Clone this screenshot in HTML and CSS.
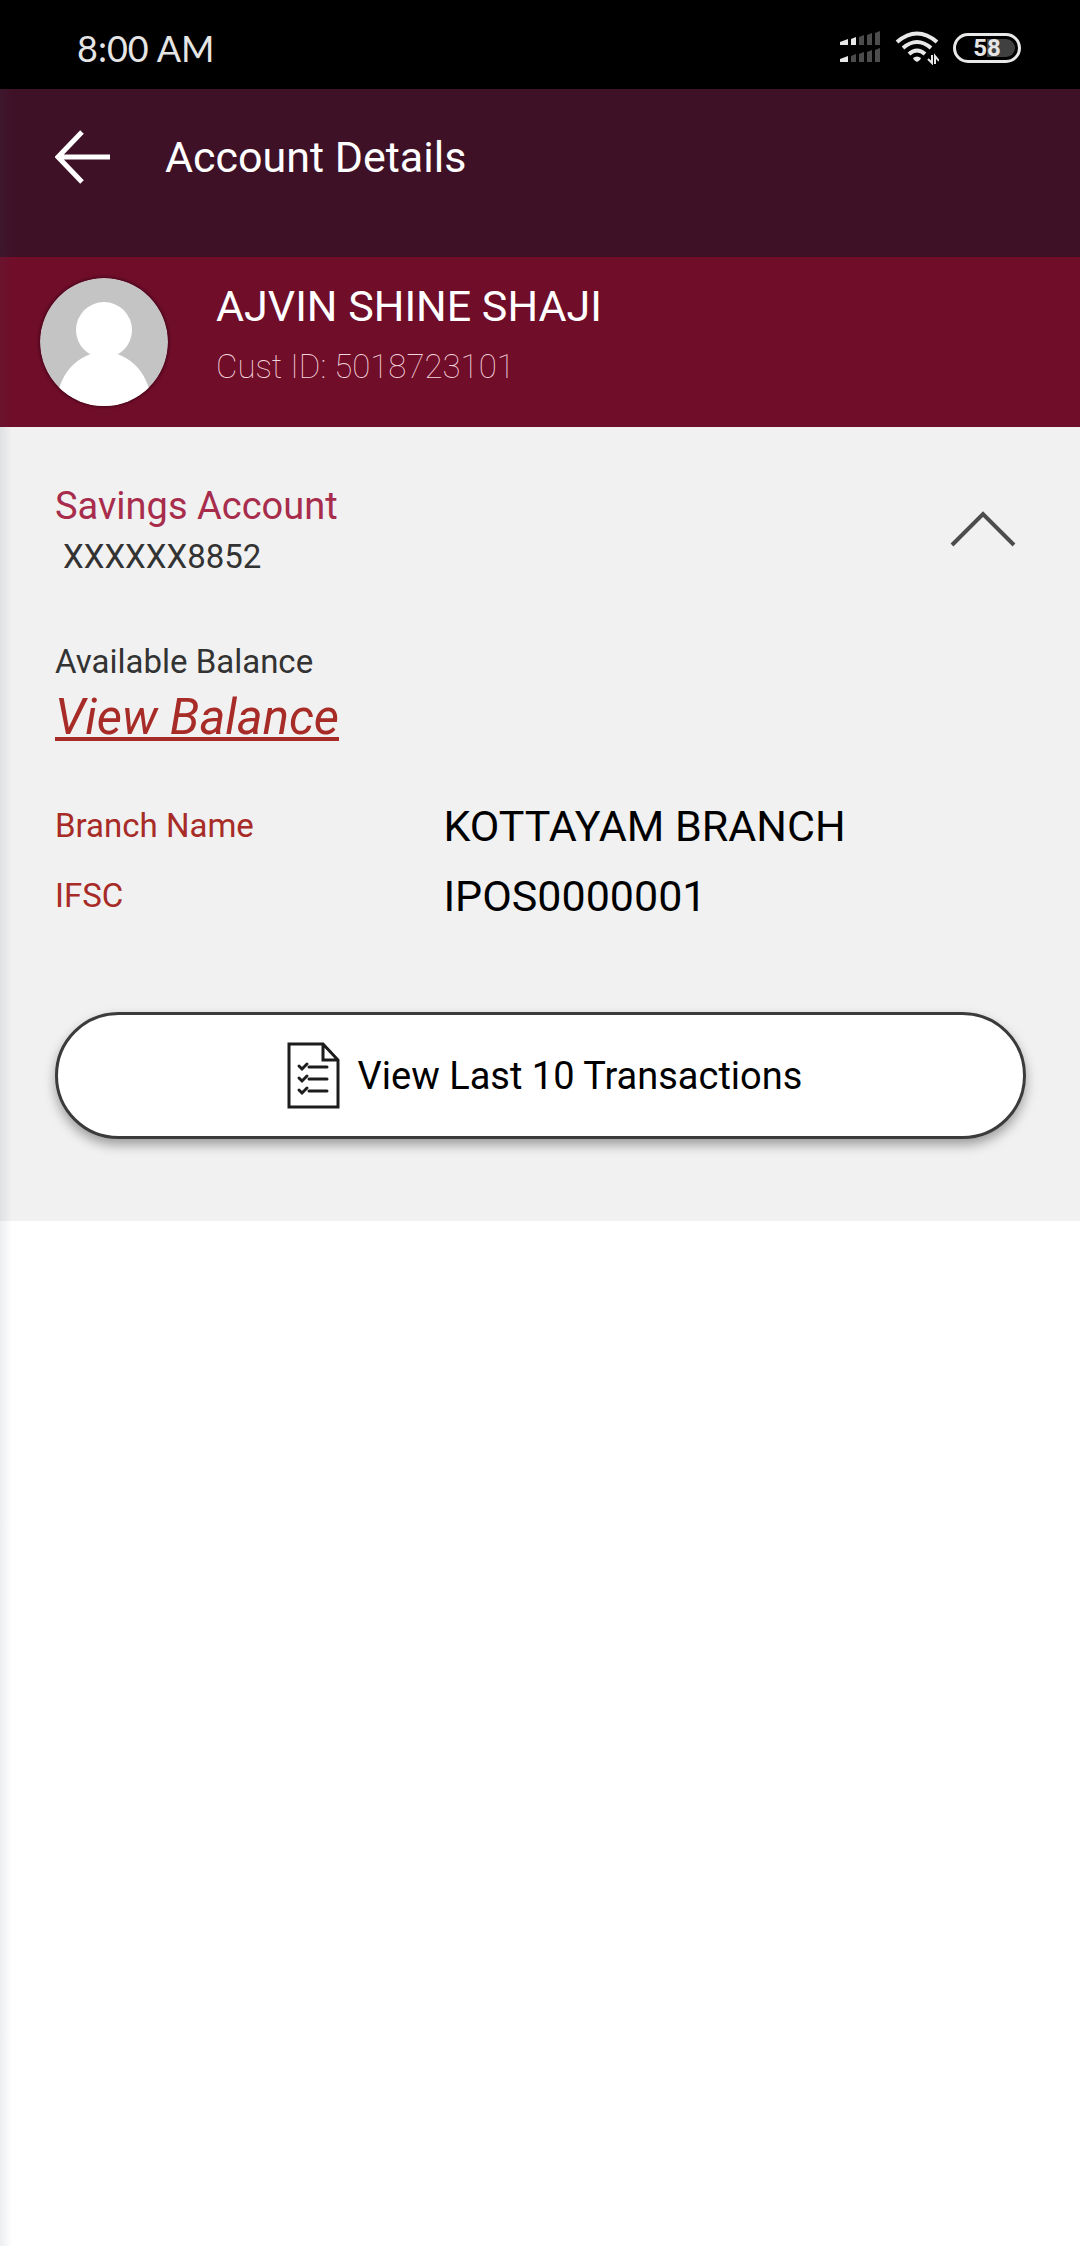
FILE: index.html
```html
<!DOCTYPE html>
<html lang="en">
<head>
<meta charset="utf-8">
<meta name="viewport" content="width=device-width, initial-scale=1">
<title>Account Details</title>
<link rel="stylesheet" href="styles.css">
</head>
<body>
<div class="status-bar">
  <span class="status-time">8:00 AM</span>
  <div class="status-icons">
    <svg class="signal" viewBox="0 0 42 34" aria-hidden="true">
      <g fill="#e8e8e8">
        <path d="M1 11l8-3v6H1zM12 8l5-2v8h-5zM1 28l8-3v6H1z"/>
      </g>
      <g fill="#4c4c4c">
        <path d="M20 6l5-2v10h-5zM28 4l5-2v12h-5zM36 2l5-2v14h-5zM12 25l5-2v8h-5zM20 23l5-2v10h-5zM28 21l5-2v12h-5zM36 19l5-2v14h-5z"/>
      </g>
    </svg>
    <svg class="wifi" viewBox="0 0 44 34" aria-hidden="true">
      <g fill="none" stroke="#e8e8e8" stroke-width="4">
        <path d="M2 11Q22-6 42 11"/>
        <path d="M8 17Q22 5 36 17"/>
        <path d="M14 23Q22 16 30 23"/>
      </g>
      <path d="M18 27q4-3 8 0l-1 2-3 2-3-2z" fill="#e8e8e8"/>
      <path d="M37 24v8l-4-4M40 33v-8l4 5" fill="none" stroke="#e8e8e8" stroke-width="2"/>
    </svg>
    <span class="battery"><span class="battery-value">58</span></span>
  </div>
</div>

<div class="screen">
  <header class="app-bar">
    <button class="back" type="button" aria-label="Back">
      <svg viewBox="0 0 56 56" aria-hidden="true"><path d="M27 3L3 28l24 25M3 28h52" fill="none" stroke="#fff" stroke-width="5"/></svg>
    </button>
    <h1 class="title">Account Details</h1>
  </header>

  <section class="profile">
    <svg class="avatar" viewBox="0 0 128 128" aria-hidden="true">
      <circle cx="64" cy="64" r="64" fill="#c4c4c4"/>
      <circle cx="64" cy="52" r="28" fill="#fff"/>
      <ellipse cx="64" cy="126" rx="47" ry="52" fill="#fff"/>
    </svg>
    <div class="profile-text">
      <p class="name">AJVIN SHINE SHAJI</p>
      <p class="cust-id">Cust ID: 5018723101</p>
    </div>
  </section>

  <main class="account">
    <div class="account-head">
      <div>
        <h2 class="account-type">Savings Account</h2>
        <p class="account-number">XXXXXX8852</p>
      </div>
      <button class="collapse" type="button" aria-label="Collapse account">
        <svg viewBox="0 0 68 36" aria-hidden="true"><path d="M3 34L34 3l31 31" fill="none" stroke="#4d4d4d" stroke-width="4"/></svg>
      </button>
    </div>
    <p class="balance-label">Available Balance</p>
    <a class="balance-link" href="#balance">View Balance</a>
    <dl class="facts">
      <dt>Branch Name</dt><dd>KOTTAYAM BRANCH</dd>
      <dt>IFSC</dt><dd>IPOS0000001</dd>
    </dl>
    <button class="transactions" type="button">
      <svg viewBox="0 0 54 67" aria-hidden="true">
        <g fill="none" stroke="#1c1c1c" stroke-width="3">
          <path d="M2 2h34l15 16v47H2zM36 2v16h15"/>
          <path d="M22 25h18M22 37h18M22 49h18" stroke-linecap="round"/>
          <path d="M12 24l3 3 5-5M12 36l3 3 5-5M12 48l3 3 5-5" stroke-linecap="round"/>
        </g>
      </svg>
      <span>View Last 10 Transactions</span>
    </button>
  </main>
</div>
</body>
</html>
```

FILE: styles.css
```css
* {
  box-sizing: border-box;
}

body {
  margin: 0;
  min-height: 100vh;
  display: flex;
  flex-direction: column;
  background: #fff;
  font-family: Roboto, "Liberation Sans", sans-serif;
  font-size: 33px;
  line-height: 40px;
}

h1, h2, p, dl, dd {
  margin: 0;
  font-weight: 400;
}

button {
  border: 0;
  padding: 0;
  background: none;
  font: inherit;
  color: inherit;
}

svg {
  display: block;
}

.status-bar {
  display: flex;
  align-items: center;
  justify-content: space-between;
  height: 89px;
  padding: 6px 59px 0 77px;
  background: #000;
  color: #e5e5e5;
}

.status-time {
  font-family: Lato, sans-serif;
  font-size: 36px;
}

.status-icons {
  display: flex;
  align-items: center;
  gap: 14px;
}

.signal {
  width: 42px;
  height: 34px;
}

.wifi {
  width: 44px;
  height: 34px;
}

.battery {
  display: flex;
  align-items: center;
  justify-content: center;
  width: 68px;
  height: 30px;
  border: 3px solid #e8e8e8;
  border-radius: 15px;
  padding: 3px;
}

.battery-value {
  flex: 1;
  border-radius: 9px;
  background: linear-gradient(90deg, #000 50%, #404040 50%);
  font-size: 24px;
  font-weight: 700;
  line-height: 18px;
  text-align: center;
}

/* Soft shade along the left edge of the sliding screen */
.screen {
  position: relative;
  flex: 1;
}

.screen::before {
  content: "";
  position: absolute;
  inset: 0 auto 0 0;
  width: 12px;
  background: linear-gradient(90deg, rgba(60, 80, 100, 0.1), rgba(60, 80, 100, 0));
}

.app-bar {
  display: flex;
  align-items: flex-start;
  gap: 54px;
  height: 168px;
  padding: 40px 55px;
  background: #3e1127;
  color: #fff;
}

.back {
  width: 56px;
  height: 56px;
}

.title {
  font-size: 43px;
  line-height: 56px;
}

.profile {
  display: flex;
  align-items: center;
  gap: 48px;
  height: 170px;
  padding: 0 40px;
  background: #700d29;
}

.avatar {
  width: 128px;
  height: 128px;
  border-radius: 50%;
  box-shadow: 0 0 3px 1px rgba(40, 0, 20, 0.6);
}

.profile-text {
  align-self: flex-start;
  padding-top: 21px;
}

.name {
  font-size: 43px;
  line-height: 56px;
  color: #fff;
}

.cust-id {
  margin-top: 13px;
  font-weight: 100;
  color: #f3d3dc;
}

.account {
  padding: 55px 54px 82px 55px;
  background: #f1f1f1;
}

.account-head {
  display: flex;
  justify-content: space-between;
  align-items: flex-start;
}

.account-type {
  font-size: 38px;
  line-height: 48px;
  color: #a82c4b;
}

.account-number {
  padding: 7px 8px;
  color: #333;
}

.collapse {
  width: 68px;
  margin: 29px 9px 0 0;
}

.balance-label {
  margin-top: 58px;
  color: #333;
}

.balance-link {
  display: inline-block;
  font-size: 49px;
  line-height: 56px;
  margin-top: 8px;
  font-style: italic;
  color: #a72b26;
  text-decoration-thickness: 4px;
  text-underline-offset: 3px;
  text-decoration-skip-ink: none;
}

.facts {
  display: grid;
  grid-template-columns: 2fr 3fr;
  align-items: center;
  row-gap: 14px;
  margin: 52px 0 88px;
}

.facts dt {
  color: #a72b26;
}

.facts dd {
  font-size: 43px;
  line-height: 56px;
  color: #000;
}

.transactions {
  display: flex;
  align-items: center;
  justify-content: center;
  gap: 17px;
  width: 100%;
  height: 127px;
  padding-left: 8px;
  border: 3px solid #3b3b3b;
  border-radius: 64px;
  background: #fff;
  box-shadow: 0 6px 12px rgba(0, 0, 0, 0.35);
  font-size: 38px;
  color: #000;
}

.transactions svg {
  width: 54px;
  height: 67px;
}
```
